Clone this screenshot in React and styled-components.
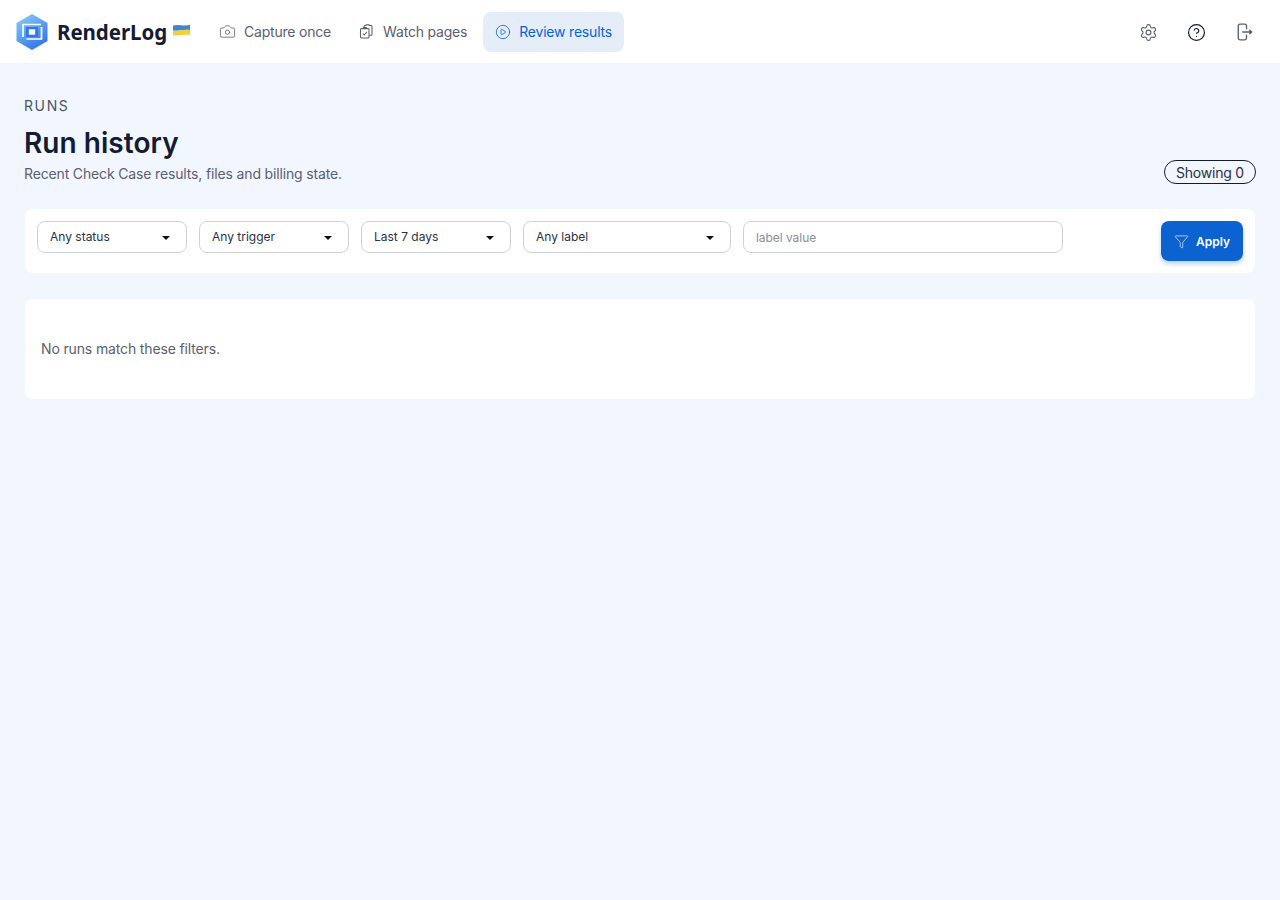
import React from 'react'
import styled, { createGlobalStyle } from 'styled-components'
import { Camera, CirclePlay, Settings, CircleHelp, Funnel } from 'lucide-react'

const GlobalStyle = createGlobalStyle`
    html, body {
        margin: 0;
        padding: 0;
        min-height: 100%;
    }
    body {
        background: #f2f6ff;
        font-family: Inter, "Liberation Sans", sans-serif;
        color: #141b34;
    }
    * {
        box-sizing: border-box;
    }
`

const Page = styled.div`
    min-height: 900px;
    background: #f2f6ff;
`

const Header = styled.header`
    display: flex;
    align-items: center;
    justify-content: space-between;
    height: 63px;
    padding: 0 17px 0 16px;
    background: #fff;
`

const HeaderLeft = styled.div`
    display: flex;
    align-items: center;
`

const Brand = styled.div`
    display: flex;
    align-items: center;
    width: 192px;
`

const BrandName = styled.span`
    margin-left: 9px;
    font-family: "Noto Sans", sans-serif;
    font-weight: 700;
    font-size: 20.5px;
    letter-spacing: -0.05px;
    color: #141b34;
`

const Flag = styled.svg`
    margin-left: 6px;
    margin-bottom: 3px;
`

const Nav = styled.nav`
    display: flex;
    align-items: center;
    gap: 4px;
`

const NavItem = styled.a`
    display: flex;
    align-items: center;
    gap: 9px;
    height: 40px;
    padding: 0 12px;
    border-radius: 8px;
    font-size: 14px;
    letter-spacing: -0.2px;
    color: ${p => (p.$active ? '#0b62d6' : '#5a6072')};
    background: ${p => (p.$active ? '#e5edf9' : 'transparent')};
`

const CameraIcon = styled(Camera)`
    margin: 0 -1px;
`

const PlayIcon = styled(CirclePlay)`
    margin: 0 -0.5px;
`

const HeaderActions = styled.div`
    display: flex;
    align-items: center;
    gap: 13px;
    padding-top: 1px;
`

const IconButton = styled.button`
    display: flex;
    align-items: center;
    justify-content: center;
    width: 36px;
    height: 36px;
    padding: 0;
    border: 0;
    background: none;
    color: ${p => p.$color || '#5a6072'};

    &:first-child {
        margin-right: -1px;
    }
`

const Main = styled.main`
    padding: 34px 24px 0;
`

const Eyebrow = styled.div`
    font-size: 14px;
    line-height: 17px;
    letter-spacing: 1.6px;
    color: #4d5366;
`

const TitleRow = styled.div`
    display: flex;
    align-items: flex-end;
    justify-content: space-between;
    margin-top: 10px;
`

const Title = styled.h1`
    margin: 0 0 2px;
    font-size: 28px;
    line-height: 38px;
    font-weight: 600;
    letter-spacing: 0.05px;
    color: #141b34;
`

const Subtitle = styled.p`
    margin: 0;
    font-size: 14px;
    line-height: 20px;
    letter-spacing: -0.15px;
    color: #5a6072;
`

const Badge = styled.span`
    display: block;
    padding: 0 11px;
    height: 24px;
    line-height: 23px;
    border: 1px solid #141b34;
    border-radius: 12px;
    font-size: 14px;
    letter-spacing: -0.2px;
    color: #2b3147;
`

const FilterCard = styled.form`
    display: flex;
    justify-content: space-between;
    margin: 25px 1px 0;
    padding: 12px;
    height: 64px;
    border-radius: 8px;
    background: #fff;
`

const Filters = styled.div`
    display: flex;
    gap: 12px;
`

const Select = styled.div`
    display: flex;
    align-items: center;
    justify-content: space-between;
    width: ${p => p.$width}px;
    height: 32px;
    padding: 0 16px 1px 12px;
    border: 1px solid #cfd2d6;
    border-radius: 8px;
    background: #fff;
    font-size: 12px;
    color: #2b3147;
`

const Caret = styled.span`
    width: 0;
    height: 0;
    margin-top: 2px;
    border-left: 4px solid transparent;
    border-right: 4px solid transparent;
    border-top: 4px solid #111;
`

const TextInput = styled.input`
    width: 320px;
    height: 32px;
    padding: 0 12px;
    border: 1px solid #cfd2d6;
    border-radius: 8px;
    background: #fff;
    font-family: inherit;
    font-size: 12px;
    letter-spacing: -0.05px;
    color: #141b34;

    &::placeholder {
        color: #8b8e96;
        opacity: 1;
    }
`

const ApplyButton = styled.button`
    display: flex;
    align-items: center;
    justify-content: center;
    gap: 7px;
    width: 82px;
    height: 40px;
    padding: 0;
    border: 0;
    border-radius: 8px;
    background: #0b62d0;
    box-shadow: 0 3px 4px rgba(11, 98, 214, 0.28);
    font-family: inherit;
    font-size: 12px;
    font-weight: 600;
    color: #fff;
`

const EmptyCard = styled.section`
    display: flex;
    align-items: center;
    height: 100px;
    margin: 26px 1px 0;
    padding: 0 16px 2px;
    border-radius: 8px;
    background: #fff;
    font-size: 14px;
    letter-spacing: -0.14px;
    color: #5a6072;
`

const Logo = () => (
    <svg width="32" height="36" viewBox="0 0 32 36">
        <defs>
            <linearGradient id="hex" x1="0.2" y1="0" x2="0.8" y2="1">
                <stop offset="0" stopColor="#86c8f8" />
                <stop offset="1" stopColor="#2c6fe9" />
            </linearGradient>
        </defs>
        <path d="M16 0 L31.5 9 V27 L16 36 L0.5 27 V9 Z" fill="url(#hex)" />
        <path d="M7 23 V10.5 H25" fill="none" stroke="#fff" strokeWidth="1.7" />
        <path d="M10.5 25 H25.5 V13" fill="none" stroke="#fff" strokeWidth="1.7" />
        <rect x="10" y="13" width="12" height="10" fill="#2f78e6" />
        <rect x="12.8" y="15.3" width="6.4" height="5.4" fill="#fff" />
    </svg>
)

const UkraineFlag = () => (
    <Flag width="17" height="12" viewBox="0 0 17 12">
        <path d="M0 1.5 Q4 0.5 8.5 1.2 T17 0.8 V6 Q12.5 5.6 8.5 6.2 T0 6.8 Z" fill="#3f86cf" />
        <path d="M0 6.8 Q4 6.8 8.5 6.2 T17 6 V10.8 Q12.5 10.4 8.5 11 T0 11.6 Z" fill="#f5cf3a" />
    </Flag>
)

const ClipboardsIcon = () => (
    <svg width="15" height="15" viewBox="0 0 15 15" fill="none" stroke="currentColor" strokeWidth="1.05" strokeLinejoin="round">
        <path d="M2.8 4.6 H9.2 A0.9 0.9 0 0 1 10 5.5 V13 A0.9 0.9 0 0 1 9.2 13.9 H2.4 A0.9 0.9 0 0 1 1.5 13 V5.5 A0.9 0.9 0 0 1 2.8 4.6 Z" />
        <path d="M4.2 4.6 V3.6 H7.4 V4.6" />
        <path d="M5 3.2 V2.4 A0.9 0.9 0 0 1 5.9 1.5 H7 V0.8 H10.2 V1.5 H12 A0.9 0.9 0 0 1 13 2.4 V10.4 A0.9 0.9 0 0 1 12 11.3 H10" />
        <path d="M4 9.6 L5.3 11 L7.8 8" />
    </svg>
)

const ExitIcon = () => (
    <svg width="18" height="18" viewBox="0 0 20 20" fill="none" stroke="currentColor" strokeWidth="1.5" strokeLinecap="round" strokeLinejoin="round">
        <path d="M11.7 6.5 V3 A1.9 1.9 0 0 0 9.8 1.2 H4.4 A1.9 1.9 0 0 0 2.5 3 V16.8 A1.9 1.9 0 0 0 4.4 18.7 H9.8 A1.9 1.9 0 0 0 11.7 16.8 V13.5" />
        <path d="M7.5 10 H17" />
        <path d="M15.5 7.8 L18 10 L15.5 12.2 Z" fill="currentColor" strokeWidth="1" />
    </svg>
)

const SELECTS = [
    { label: 'Any status', width: 150 },
    { label: 'Any trigger', width: 150 },
    { label: 'Last 7 days', width: 150 },
    { label: 'Any label', width: 208 }
]

const App = () => {
    return (
        <Page>
            <GlobalStyle />
            <Header>
                <HeaderLeft>
                    <Brand>
                        <Logo />
                        <BrandName>RenderLog</BrandName>
                        <UkraineFlag />
                    </Brand>
                    <Nav>
                        <NavItem>
                            <CameraIcon size={17} strokeWidth={1.15} />
                            Capture once
                        </NavItem>
                        <NavItem>
                            <ClipboardsIcon />
                            Watch pages
                        </NavItem>
                        <NavItem $active>
                            <PlayIcon size={16} strokeWidth={1.2} />
                            Review results
                        </NavItem>
                    </Nav>
                </HeaderLeft>
                <HeaderActions>
                    <IconButton>
                        <Settings size={19} strokeWidth={1.4} />
                    </IconButton>
                    <IconButton $color="#141b34">
                        <CircleHelp size={19} strokeWidth={1.5} />
                    </IconButton>
                    <IconButton>
                        <ExitIcon />
                    </IconButton>
                </HeaderActions>
            </Header>
            <Main>
                <Eyebrow>RUNS</Eyebrow>
                <TitleRow>
                    <div>
                        <Title>Run history</Title>
                        <Subtitle>Recent Check Case results, files and billing state.</Subtitle>
                    </div>
                    <Badge>Showing 0</Badge>
                </TitleRow>
                <FilterCard>
                    <Filters>
                        {SELECTS.map(item => (
                            <Select key={item.label} $width={item.width}>
                                {item.label}
                                <Caret />
                            </Select>
                        ))}
                        <TextInput placeholder="label value" />
                    </Filters>
                    <ApplyButton type="button">
                        <Funnel size={15} strokeWidth={1} />
                        Apply
                    </ApplyButton>
                </FilterCard>
                <EmptyCard>No runs match these filters.</EmptyCard>
            </Main>
        </Page>
    )
}

export default App
